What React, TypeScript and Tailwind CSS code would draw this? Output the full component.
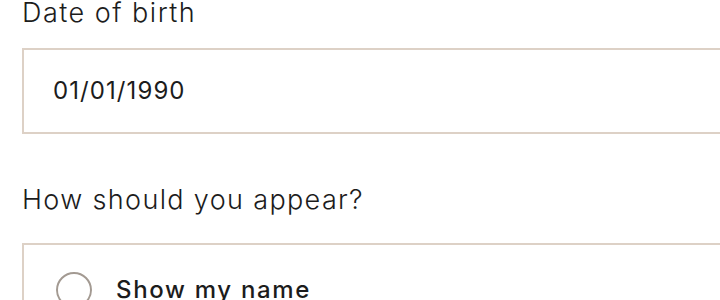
import React from 'react'

const font = { fontFamily: 'Inter, "Noto Sans", sans-serif' }

export default function App() {
  return (
    <div className="w-[720px] h-[300px] overflow-hidden bg-white" style={font}>
      <div className="pl-[22px] w-[800px]">
        <label className="block text-[27px] leading-[30px] -mt-[2px] font-light tracking-[0.055em] text-[#1c1c1c]">
          Date of birth
        </label>
        <div className="mt-[20px] h-[86px] border-2 border-[#ddd1c6] flex items-center pl-[29px]">
          <span className="text-[24px] text-[#1c1c1c] tracking-[0.045em]">01/01/1990</span>
        </div>
        <label className="block mt-[51px] text-[27px] leading-[30px] font-light tracking-[0.05em] text-[#1c1c1c]">
          How should you appear?
        </label>
        <div className="mt-[28px] border-2 border-[#ddd1c6] pt-[27px] pl-[32px] h-[120px]">
          <div className="flex items-center gap-[24px]">
            <span className="w-[36px] h-[36px] rounded-full border-2 border-[#a39a92] shrink-0" />
            <span className="text-[24px] font-medium text-[#1c1c1c] tracking-[0.07em]">Show my name</span>
          </div>
        </div>
      </div>
    </div>
  )
}
